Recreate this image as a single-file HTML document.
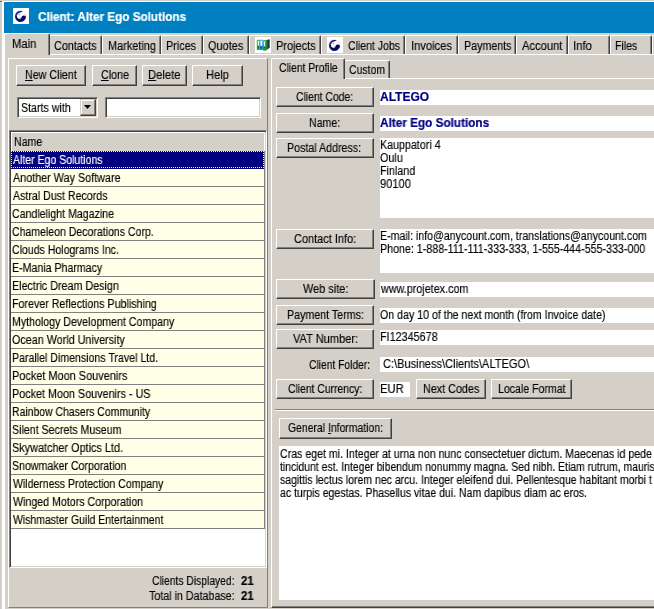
<!DOCTYPE html><html><head><meta charset="utf-8"><title>Client: Alter Ego Solutions</title><style>
html,body{margin:0;padding:0;}
body{width:654px;height:609px;overflow:hidden;background:#d4d0c8;position:relative;font-family:"Liberation Sans",sans-serif;font-size:12px;color:#000;line-height:14px;}
div,span{box-sizing:border-box;}
.a{position:absolute;white-space:nowrap;}
.t{position:absolute;white-space:nowrap;transform-origin:0 0;will-change:transform;-webkit-text-stroke:0.15px currentColor;}
.b{font-weight:bold;-webkit-text-stroke:0.2px currentColor;}
.btn{position:absolute;background:#d4d0c8;border:1px solid;border-color:#fff #404040 #404040 #fff;box-shadow:inset -1px -1px 0 #808080;}
.tab{position:absolute;top:35px;height:19px;border-left:1px solid #fff;border-top:1px solid #fff;border-right:1px solid #404040;box-shadow:inset -1px 0 0 #808080;border-radius:2px 2px 0 0;background:#d4d0c8;}
.sunk{position:absolute;background:#fff;border:1px solid;border-color:#808080 #fff #fff #808080;box-shadow:inset 1px 1px 0 #404040,inset -1px -1px 0 #d4d0c8;}
.fld{position:absolute;background:#fff;}
.row{position:absolute;left:11px;width:253px;height:18px;background:#ffffe7;border-bottom:1px solid #808080;}
u{text-decoration:underline;}
</style></head><body>
<div class="a" style="left:2px;top:1px;width:3px;height:608px;background:#fff"></div><div class="a" style="left:2px;top:1px;width:652px;height:1px;background:#fff"></div><div class="a" style="left:0;top:1px;width:2px;height:1px;background:#606060"></div>
<div class="a" style="left:4px;top:2px;width:650px;height:31px;background:#0080c0"></div>
<svg width="0" height="0" style="position:absolute"><defs><linearGradient id="gg" x1="0" y1="0" x2="1" y2="1"><stop offset="0" stop-color="#4848c8"/><stop offset="0.4" stop-color="#0c0c48"/><stop offset="0.6" stop-color="#080850"/><stop offset="1" stop-color="#0000a8"/></linearGradient><linearGradient id="gr" x1="0" y1="0" x2="0" y2="1"><stop offset="0" stop-color="#e8e8fa"/><stop offset="1" stop-color="#4040b0"/></linearGradient><linearGradient id="gf" x1="0.6" y1="0.1" x2="0.8" y2="0.7"><stop offset="0" stop-color="#fff"/><stop offset="0.6" stop-color="#fff"/><stop offset="1" stop-color="#8888d8"/></linearGradient></defs></svg>
<svg class="a" style="left:13px;top:8px" width="16" height="16" viewBox="0 0 16 16"><rect width="16" height="16" fill="#fff"/><circle cx="7.5" cy="8.4" r="5.3" fill="url(#gf)" stroke="url(#gr)" stroke-width="0.5"/><path d="M9.6 3.2 A5.5 5.5 0 1 0 12.95 9 Q12.4 7.2 10.4 7.5 Q8.5 8 8.4 9.8 Q8 11.6 6.3 11.2 Q3.6 10.2 3.8 7.6 Q4.2 5.2 7 4.4 Q8.8 4.1 9.6 3.2Z" fill="url(#gg)"/><circle cx="6.3" cy="6.7" r="0.7" fill="#9090d8"/></svg>
<span class="t b" style="left:37.51px;top:10px;transform:scaleX(0.9767);color:#fff;">Client: Alter Ego Solutions</span>
<div class="a" style="left:4px;top:54px;width:650px;height:1px;background:#fff"></div>
<div class="tab" style="left:48px;width:54px"></div>
<span class="t" style="left:54.14px;top:39px;transform:scaleX(0.9016);">Contacts</span>
<div class="tab" style="left:102px;width:59px"></div>
<span class="t" style="left:108.09px;top:39px;transform:scaleX(0.9101);">Marketing</span>
<div class="tab" style="left:161px;width:42px"></div>
<span class="t" style="left:166.40px;top:39px;transform:scaleX(0.9004);">Prices</span>
<div class="tab" style="left:203px;width:46px"></div>
<span class="t" style="left:208.43px;top:39px;transform:scaleX(0.9116);">Quotes</span>
<div class="tab" style="left:249px;width:72px"><svg class="a" style="left:5px;top:1px" width="16" height="16" viewBox="0 0 16 16"><defs><linearGradient id="bg1" x1="0" y1="0" x2="0" y2="1"><stop offset="0" stop-color="#40c060"/><stop offset="0.6" stop-color="#20b040"/><stop offset="1" stop-color="#10a030"/></linearGradient><linearGradient id="bg2" x1="0" y1="0" x2="0" y2="1"><stop offset="0" stop-color="#70b8f0"/><stop offset="0.6" stop-color="#2080e0"/><stop offset="1" stop-color="#1070d0"/></linearGradient><linearGradient id="bg3" x1="0" y1="0" x2="1" y2="0"><stop offset="0" stop-color="#209050"/><stop offset="1" stop-color="#101818"/></linearGradient></defs><rect width="16" height="16" fill="#fff"/><path d="M11 3 L14.6 2.2 L14.6 10.8 L11 13.6Z" fill="url(#bg3)"/><rect x="1.8" y="2.7" width="3.1" height="10.2" rx="0.8" fill="url(#bg1)"/><rect x="4.9" y="2.4" width="3" height="10.7" rx="0.8" fill="url(#bg2)"/><rect x="7.9" y="2.9" width="3.2" height="10.8" rx="0.8" fill="url(#bg1)"/><rect x="2.9" y="4" width="1.1" height="4.7" fill="#fff"/><rect x="5.5" y="4" width="1.6" height="4.9" fill="#fff"/><rect x="8.9" y="4.7" width="1.1" height="4.4" fill="#fff"/><rect x="2.8" y="9.4" width="1.2" height="1" fill="#085018"/><rect x="5.6" y="10" width="1.4" height="0.9" fill="#083878"/><rect x="8.8" y="10.2" width="1.3" height="1" fill="#085018"/></svg></div>
<span class="t" style="left:276.38px;top:39px;transform:scaleX(0.9170);">Projects</span>
<div class="tab" style="left:321px;width:84px"><svg class="a" style="left:5px;top:1px" width="16" height="16" viewBox="0 0 16 16"><rect width="16" height="16" fill="#fff"/><circle cx="7.5" cy="8.4" r="5.3" fill="url(#gf)" stroke="url(#gr)" stroke-width="0.5"/><path d="M9.6 3.2 A5.5 5.5 0 1 0 12.95 9 Q12.4 7.2 10.4 7.5 Q8.5 8 8.4 9.8 Q8 11.6 6.3 11.2 Q3.6 10.2 3.8 7.6 Q4.2 5.2 7 4.4 Q8.8 4.1 9.6 3.2Z" fill="url(#gg)"/><circle cx="6.3" cy="6.7" r="0.7" fill="#9090d8"/></svg></div>
<span class="t" style="left:348.45px;top:39px;transform:scaleX(0.8755);">Client Jobs</span>
<div class="tab" style="left:405px;width:53px"></div>
<span class="t" style="left:411.35px;top:39px;transform:scaleX(0.9318);">Invoices</span>
<div class="tab" style="left:458px;width:58px"></div>
<span class="t" style="left:463.61px;top:39px;transform:scaleX(0.8906);">Payments</span>
<div class="tab" style="left:516px;width:52px"></div>
<span class="t" style="left:522.00px;top:39px;transform:scaleX(0.9318);">Account</span>
<div class="tab" style="left:568px;width:42px"></div>
<span class="t" style="left:573.33px;top:39px;transform:scaleX(0.9469);">Info</span>
<div class="tab" style="left:610px;width:42px"></div>
<span class="t" style="left:615.12px;top:39px;transform:scaleX(0.8796);">Files</span>
<div class="tab" style="left:652px;width:48px"></div>
<div class="tab" style="left:4px;top:33px;width:46px;height:22px"></div>
<span class="t" style="left:11.66px;top:37px;transform:scaleX(0.9361);">Main</span>
<div class="a" style="left:8px;top:58px;width:260px;height:550px;border:1px solid;border-color:#fff #808080 #808080 #fff"></div>
<div class="btn" style="left:16px;top:65px;width:70px;height:21px"></div>
<span class="t" style="left:24.61px;top:68px;transform:scaleX(0.8914);"><u>N</u>ew Client</span>
<div class="btn" style="left:92px;top:65px;width:45px;height:21px"></div>
<span class="t" style="left:100.94px;top:68px;transform:scaleX(0.8926);"><u>C</u>lone</span>
<div class="btn" style="left:142px;top:65px;width:45px;height:21px"></div>
<span class="t" style="left:148.36px;top:68px;transform:scaleX(0.9358);"><u>D</u>elete</span>
<div class="btn" style="left:192px;top:65px;width:51px;height:21px"></div>
<span class="t" style="left:205.67px;top:68px;transform:scaleX(0.9254);">Help</span>
<div class="sunk" style="left:17px;top:97px;width:81px;height:21px"></div>
<span class="t" style="left:20.95px;top:101px;transform:scaleX(0.8879);">Starts with</span>
<div class="btn" style="left:80px;top:99px;width:16px;height:17px;border-color:#d4d0c8 #404040 #404040 #d4d0c8;box-shadow:inset -1px -1px 0 #808080,inset 1px 1px 0 #fff"><svg class="a" style="left:3px;top:5px" width="7" height="4"><path d="M0 0H7L3.5 4Z" fill="#000"/></svg></div>
<div class="sunk" style="left:105px;top:97px;width:156px;height:21px"></div>
<div class="sunk" style="left:9px;top:130px;width:258px;height:438px"></div><div class="a" style="left:264px;top:151px;width:1px;height:378px;background:#808080"></div>
<div class="a" style="left:11px;top:132px;width:253px;height:19px;background:#d4d0c8;border-top:1px solid #fff;border-left:1px solid #fff"></div>
<span class="t" style="left:14.11px;top:135px;transform:scaleX(0.8852);">Name</span>
<div class="row" style="top:151px;background:#000080;border:0"><div class="a" style="left:0;top:0;width:253px;height:17px;border:1px dotted #ffff60"></div></div>
<span class="t" style="left:13.00px;top:153px;transform:scaleX(0.8768);color:#fff;">Alter Ego Solutions</span>
<div class="row" style="top:169px"></div>
<span class="t" style="left:13.00px;top:171px;transform:scaleX(0.8991);">Another Way Software</span>
<div class="row" style="top:187px"></div>
<span class="t" style="left:13.00px;top:189px;transform:scaleX(0.8856);">Astral Dust Records</span>
<div class="row" style="top:205px"></div>
<span class="t" style="left:12.45px;top:207px;transform:scaleX(0.8840);">Candlelight Magazine</span>
<div class="row" style="top:223px"></div>
<span class="t" style="left:12.45px;top:225px;transform:scaleX(0.8776);">Chameleon Decorations Corp.</span>
<div class="row" style="top:241px"></div>
<span class="t" style="left:12.45px;top:243px;transform:scaleX(0.8803);">Clouds Holograms Inc.</span>
<div class="row" style="top:259px"></div>
<span class="t" style="left:12.12px;top:261px;transform:scaleX(0.8842);">E-Mania Pharmacy</span>
<div class="row" style="top:277px"></div>
<span class="t" style="left:12.10px;top:279px;transform:scaleX(0.8952);">Electric Dream Design</span>
<div class="row" style="top:295px"></div>
<span class="t" style="left:12.11px;top:297px;transform:scaleX(0.8894);">Forever Reflections Publishing</span>
<div class="row" style="top:313px"></div>
<span class="t" style="left:12.12px;top:315px;transform:scaleX(0.8844);">Mythology Development Company</span>
<div class="row" style="top:331px"></div>
<span class="t" style="left:12.44px;top:333px;transform:scaleX(0.8967);">Ocean World University</span>
<div class="row" style="top:349px"></div>
<span class="t" style="left:12.12px;top:351px;transform:scaleX(0.8827);">Parallel Dimensions Travel Ltd.</span>
<div class="row" style="top:367px"></div>
<span class="t" style="left:12.09px;top:369px;transform:scaleX(0.9102);">Pocket Moon Souvenirs</span>
<div class="row" style="top:385px"></div>
<span class="t" style="left:12.10px;top:387px;transform:scaleX(0.8990);">Pocket Moon Souvenirs - US</span>
<div class="row" style="top:403px"></div>
<span class="t" style="left:12.13px;top:405px;transform:scaleX(0.8698);">Rainbow Chasers Community</span>
<div class="row" style="top:421px"></div>
<span class="t" style="left:12.45px;top:423px;transform:scaleX(0.8869);">Silent Secrets Museum</span>
<div class="row" style="top:439px"></div>
<span class="t" style="left:12.43px;top:441px;transform:scaleX(0.9050);">Skywatcher Optics Ltd.</span>
<div class="row" style="top:457px"></div>
<span class="t" style="left:12.45px;top:459px;transform:scaleX(0.8836);">Snowmaker Corporation</span>
<div class="row" style="top:475px"></div>
<span class="t" style="left:12.89px;top:477px;transform:scaleX(0.8765);">Wilderness Protection Company</span>
<div class="row" style="top:493px"></div>
<span class="t" style="left:12.89px;top:495px;transform:scaleX(0.8864);">Winged Motors Corporation</span>
<div class="row" style="top:511px"></div>
<span class="t" style="left:12.89px;top:513px;transform:scaleX(0.8701);">Wishmaster Guild Entertainment</span>
<span class="t" style="left:151.76px;top:574px;transform:scaleX(0.8593);">Clients Displayed:</span>
<span class="t b" style="left:241.45px;top:574px;transform:scaleX(0.9426);">21</span>
<span class="t" style="left:148.78px;top:589px;transform:scaleX(0.8908);">Total in Database:</span>
<span class="t b" style="left:241.45px;top:589px;transform:scaleX(0.9426);">21</span>
<div class="a" style="left:271px;top:78px;width:390px;height:530px;border:1px solid;border-color:#fff #404040 #404040 #fff;box-shadow:inset 0 -1px 0 #808080"></div>
<div class="tab" style="left:343px;top:60px;width:47px;height:18px"></div>
<span class="t" style="left:348.95px;top:63px;transform:scaleX(0.8727);">Custom</span>
<div class="tab" style="left:271px;top:58px;width:74px;height:21px"></div>
<span class="t" style="left:278.76px;top:61px;transform:scaleX(0.8628);">Client Profile</span>
<div class="btn" style="left:276px;top:87px;width:98px;height:20px"></div>
<span class="t" style="left:295.86px;top:90px;transform:scaleX(0.8654);">Client Code:</span>
<div class="btn" style="left:276px;top:113px;width:98px;height:20px"></div>
<span class="t" style="left:308.92px;top:116px;transform:scaleX(0.8842);">Name:</span>
<div class="btn" style="left:276px;top:138px;width:98px;height:20px"></div>
<span class="t" style="left:287.41px;top:141px;transform:scaleX(0.8886);">Postal Address:</span>
<div class="btn" style="left:276px;top:229px;width:98px;height:20px"></div>
<span class="t" style="left:293.73px;top:232px;transform:scaleX(0.9145);">Contact Info:</span>
<div class="btn" style="left:276px;top:279px;width:99px;height:20px"></div>
<span class="t" style="left:302.69px;top:282px;transform:scaleX(0.9111);">Web site:</span>
<div class="btn" style="left:276px;top:305px;width:98px;height:20px"></div>
<span class="t" style="left:286.61px;top:308px;transform:scaleX(0.8877);">Payment Terms:</span>
<div class="btn" style="left:276px;top:329px;width:98px;height:20px"></div>
<span class="t" style="left:292.78px;top:332px;transform:scaleX(0.9209);">VAT Number:</span>
<div class="btn" style="left:276px;top:379px;width:98px;height:20px"></div>
<span class="t" style="left:287.76px;top:382px;transform:scaleX(0.8629);">Client Currency:</span>
<span class="t" style="left:308.86px;top:358px;transform:scaleX(0.8560);">Client Folder:</span>
<div class="fld" style="left:380px;top:90px;width:280px;height:15px"></div>
<span class="t b" style="left:379.62px;top:90px;transform:scaleX(1.0010);color:#000080;">ALTEGO</span>
<div class="fld" style="left:380px;top:116px;width:280px;height:15px"></div>
<span class="t b" style="left:379.63px;top:116px;transform:scaleX(0.9801);color:#000080;">Alter Ego Solutions</span>
<div class="fld" style="left:380px;top:138px;width:280px;height:80px"></div>
<span class="t" style="left:379.81px;top:138px;transform:scaleX(0.8899);">Kauppatori 4</span>
<span class="t" style="left:380.14px;top:151px;transform:scaleX(0.9005);">Oulu</span>
<span class="t" style="left:379.80px;top:164px;transform:scaleX(0.8957);">Finland</span>
<span class="t" style="left:380.12px;top:177px;transform:scaleX(0.9240);">90100</span>
<div class="fld" style="left:380px;top:229px;width:280px;height:44px"></div>
<span class="t" style="left:380.12px;top:229px;transform:scaleX(0.8843);">E-mail: info@anycount.com, translations@anycount.com</span>
<span class="t" style="left:380.11px;top:242px;transform:scaleX(0.8901);">Phone: 1-888-111-111-333-333, 1-555-444-555-333-000</span>
<div class="fld" style="left:380px;top:282px;width:280px;height:15px"></div>
<span class="t" style="left:380.60px;top:282px;transform:scaleX(0.8983);">www.projetex.com</span>
<div class="fld" style="left:380px;top:308px;width:280px;height:15px"></div>
<span class="t" style="left:380.45px;top:308px;transform:scaleX(0.8849);">On day 10 of the next month (from Invoice date)</span>
<div class="fld" style="left:380px;top:330px;width:280px;height:15px"></div>
<span class="t" style="left:380.10px;top:330px;transform:scaleX(0.8992);">FI12345678</span>
<div class="fld" style="left:380px;top:357px;width:280px;height:15px"></div>
<span class="t" style="left:383.12px;top:357px;transform:scaleX(0.9222);">C:\Business\Clients\ALTEGO\</span>
<div class="fld" style="left:380px;top:382px;width:30px;height:15px"></div>
<span class="t" style="left:379.67px;top:382px;transform:scaleX(0.9347);">EUR</span>
<div class="btn" style="left:416px;top:379px;width:70px;height:20px"></div>
<span class="t" style="left:422.50px;top:382px;transform:scaleX(0.8980);">Next Codes</span>
<div class="btn" style="left:491px;top:379px;width:81px;height:20px"></div>
<span class="t" style="left:497.62px;top:382px;transform:scaleX(0.8807);">Locale Format</span>
<div class="a" style="left:275px;top:409px;width:380px;height:2px;border-top:1px solid #808080;border-bottom:1px solid #fff"></div>
<div class="btn" style="left:279px;top:418px;width:113px;height:21px"></div>
<span class="t" style="left:288.36px;top:421px;transform:scaleX(0.8678);">General <u>I</u>nformation:</span>
<div class="fld" style="left:279px;top:446px;width:380px;height:154px"></div>
<span class="t" style="left:279.75px;top:447px;transform:scaleX(0.8836);">Cras eget mi. Integer at urna non nunc consectetuer dictum. Maecenas id pede</span>
<span class="t" style="left:280.19px;top:460px;transform:scaleX(0.8670);">tincidunt est. Integer bibendum nonummy magna. Sed nibh. Etiam rutrum, mauris at</span>
<span class="t" style="left:279.97px;top:473px;transform:scaleX(0.8737);">sagittis lectus lorem nec arcu. Integer eleifend dui. Pellentesque habitant morbi t</span>
<span class="t" style="left:279.86px;top:486px;transform:scaleX(0.8769);">ac turpis egestas. Phasellus vitae dui. Nam dapibus diam ac eros.</span>
</body></html>
